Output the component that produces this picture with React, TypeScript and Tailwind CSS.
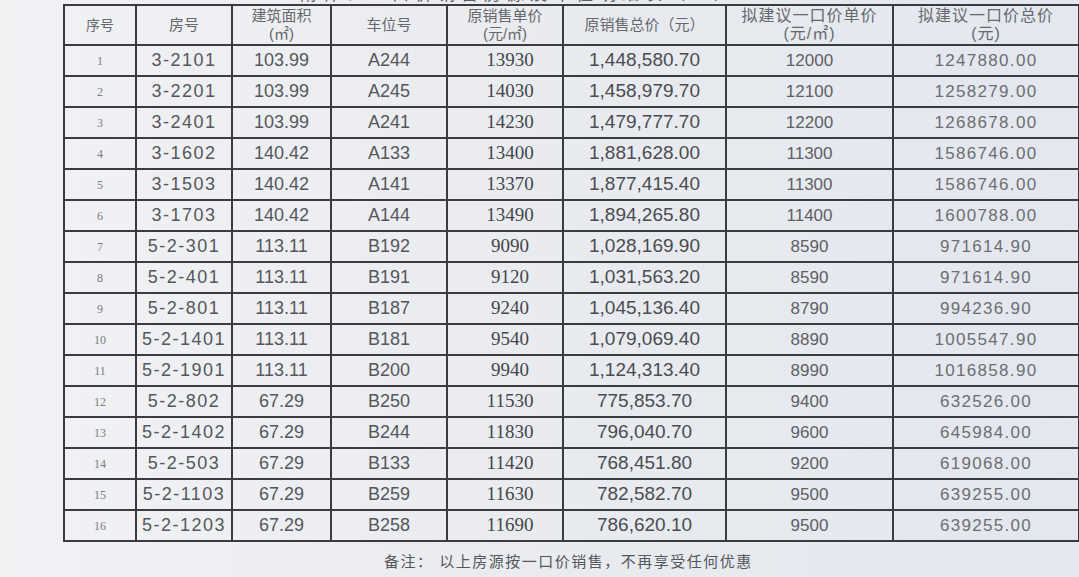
import React from 'react';

// 一口价房源明细（照片复刻）
interface Fang {
  xh: number;
  fh: string;
  mj: string;
  cw: string;
  dj: string;
  zj: string;
  jydj: string;
  jyzj: string;
}

const rows: Fang[] = [
  { xh: 1, fh: '3-2101', mj: '103.99', cw: 'A244', dj: '13930', zj: '1,448,580.70', jydj: '12000', jyzj: '1247880.00' },
  { xh: 2, fh: '3-2201', mj: '103.99', cw: 'A245', dj: '14030', zj: '1,458,979.70', jydj: '12100', jyzj: '1258279.00' },
  { xh: 3, fh: '3-2401', mj: '103.99', cw: 'A241', dj: '14230', zj: '1,479,777.70', jydj: '12200', jyzj: '1268678.00' },
  { xh: 4, fh: '3-1602', mj: '140.42', cw: 'A133', dj: '13400', zj: '1,881,628.00', jydj: '11300', jyzj: '1586746.00' },
  { xh: 5, fh: '3-1503', mj: '140.42', cw: 'A141', dj: '13370', zj: '1,877,415.40', jydj: '11300', jyzj: '1586746.00' },
  { xh: 6, fh: '3-1703', mj: '140.42', cw: 'A144', dj: '13490', zj: '1,894,265.80', jydj: '11400', jyzj: '1600788.00' },
  { xh: 7, fh: '5-2-301', mj: '113.11', cw: 'B192', dj: '9090', zj: '1,028,169.90', jydj: '8590', jyzj: '971614.90' },
  { xh: 8, fh: '5-2-401', mj: '113.11', cw: 'B191', dj: '9120', zj: '1,031,563.20', jydj: '8590', jyzj: '971614.90' },
  { xh: 9, fh: '5-2-801', mj: '113.11', cw: 'B187', dj: '9240', zj: '1,045,136.40', jydj: '8790', jyzj: '994236.90' },
  { xh: 10, fh: '5-2-1401', mj: '113.11', cw: 'B181', dj: '9540', zj: '1,079,069.40', jydj: '8890', jyzj: '1005547.90' },
  { xh: 11, fh: '5-2-1901', mj: '113.11', cw: 'B200', dj: '9940', zj: '1,124,313.40', jydj: '8990', jyzj: '1016858.90' },
  { xh: 12, fh: '5-2-802', mj: '67.29', cw: 'B250', dj: '11530', zj: '775,853.70', jydj: '9400', jyzj: '632526.00' },
  { xh: 13, fh: '5-2-1402', mj: '67.29', cw: 'B244', dj: '11830', zj: '796,040.70', jydj: '9600', jyzj: '645984.00' },
  { xh: 14, fh: '5-2-503', mj: '67.29', cw: 'B133', dj: '11420', zj: '768,451.80', jydj: '9200', jyzj: '619068.00' },
  { xh: 15, fh: '5-2-1103', mj: '67.29', cw: 'B259', dj: '11630', zj: '782,582.70', jydj: '9500', jyzj: '639255.00' },
  { xh: 16, fh: '5-2-1203', mj: '67.29', cw: 'B258', dj: '11690', zj: '786,620.10', jydj: '9500', jyzj: '639255.00' },
];

const th = 'border-2 border-[#3a3c40] p-0 font-normal text-[#66686d] leading-[18px] align-middle';
const td = 'border-2 border-[#3a3c40] p-0 text-center align-middle';

export default function App() {
  return (
    <div
      className="w-[1079px] h-[577px] overflow-hidden bg-gradient-to-r from-[#f1f2f4] via-[#e9ebef] to-[#e3e7ee] text-[#4c4e53]"
      style={{ fontFamily: '"Liberation Sans", "Noto Sans CJK SC", sans-serif' }}
    >
      {/* 被裁掉的标题 */}
      <div className="h-[4px] overflow-hidden pl-[300px]">
        <div className="-mt-[14px] text-[17px] leading-[18px] tracking-[6px] text-[#5a5d63]">
          附件：一口价销售房源及车位明细表（二）
        </div>
      </div>

      <table className="ml-[63px] w-[1015px] table-fixed border-collapse">
        <colgroup>
          <col className="w-[72px]" />
          <col className="w-[96px]" />
          <col className="w-[99px]" />
          <col className="w-[116px]" />
          <col className="w-[116px]" />
          <col className="w-[163px]" />
          <col className="w-[167px]" />
          <col className="w-[186px]" />
        </colgroup>
        <thead>
          <tr className="h-[40px]">
            <th className={`${th} text-[14px]`}>序号</th>
            <th className={`${th} text-[15px]`}>房号</th>
            <th className={`${th} text-[15px]`}>
              建筑面积
              <br />
              (㎡)
            </th>
            <th className={`${th} text-[15px]`}>车位号</th>
            <th className={`${th} text-[15px]`}>
              原销售单价
              <br />
              (元/㎡)
            </th>
            <th className={`${th} text-[15px] text-[#4e5055]`}>原销售总价（元）</th>
            <th className={`${th} text-[16px] tracking-[1px]`}>
              拟建议一口价单价
              <br />
              (元/㎡)
            </th>
            <th className={`${th} text-[16px] tracking-[1px]`}>
              拟建议一口价总价
              <br />
              (元)
            </th>
          </tr>
        </thead>
        <tbody>
          {rows.map((r) => (
            <tr key={r.xh} className="h-[31px]">
              <td className={`${td} text-[12px] text-[#7a7c80]`} style={{ fontFamily: '"Liberation Serif", serif' }}>
                {r.xh}
              </td>
              <td className={`${td} text-[18px] tracking-[1.5px] text-[#55575c]`}>{r.fh}</td>
              <td className={`${td} text-[18px] text-[#55575c]`}>{r.mj}</td>
              <td className={`${td} text-[18px] text-[#55575c]`}>{r.cw}</td>
              <td className={`${td} pl-[10px] text-[19px] text-[#44464b]`} style={{ fontFamily: '"Liberation Serif", serif' }}>
                {r.dj}
              </td>
              <td className={`${td} text-[19px] text-[#4a4c51]`}>{r.zj}</td>
              <td className={`${td} text-[17px] text-[#5e6065]`}>{r.jydj}</td>
              <td className={`${td} text-[17px] tracking-[1.3px] text-[#6c6e73]`}>{r.jyzj}</td>
            </tr>
          ))}
        </tbody>
      </table>

      <div className="mt-[9px] pl-[384px] text-[15px] tracking-[1.5px] text-[#55575c]">
        备注：&nbsp;以上房源按一口价销售，不再享受任何优惠
      </div>
    </div>
  );
}
